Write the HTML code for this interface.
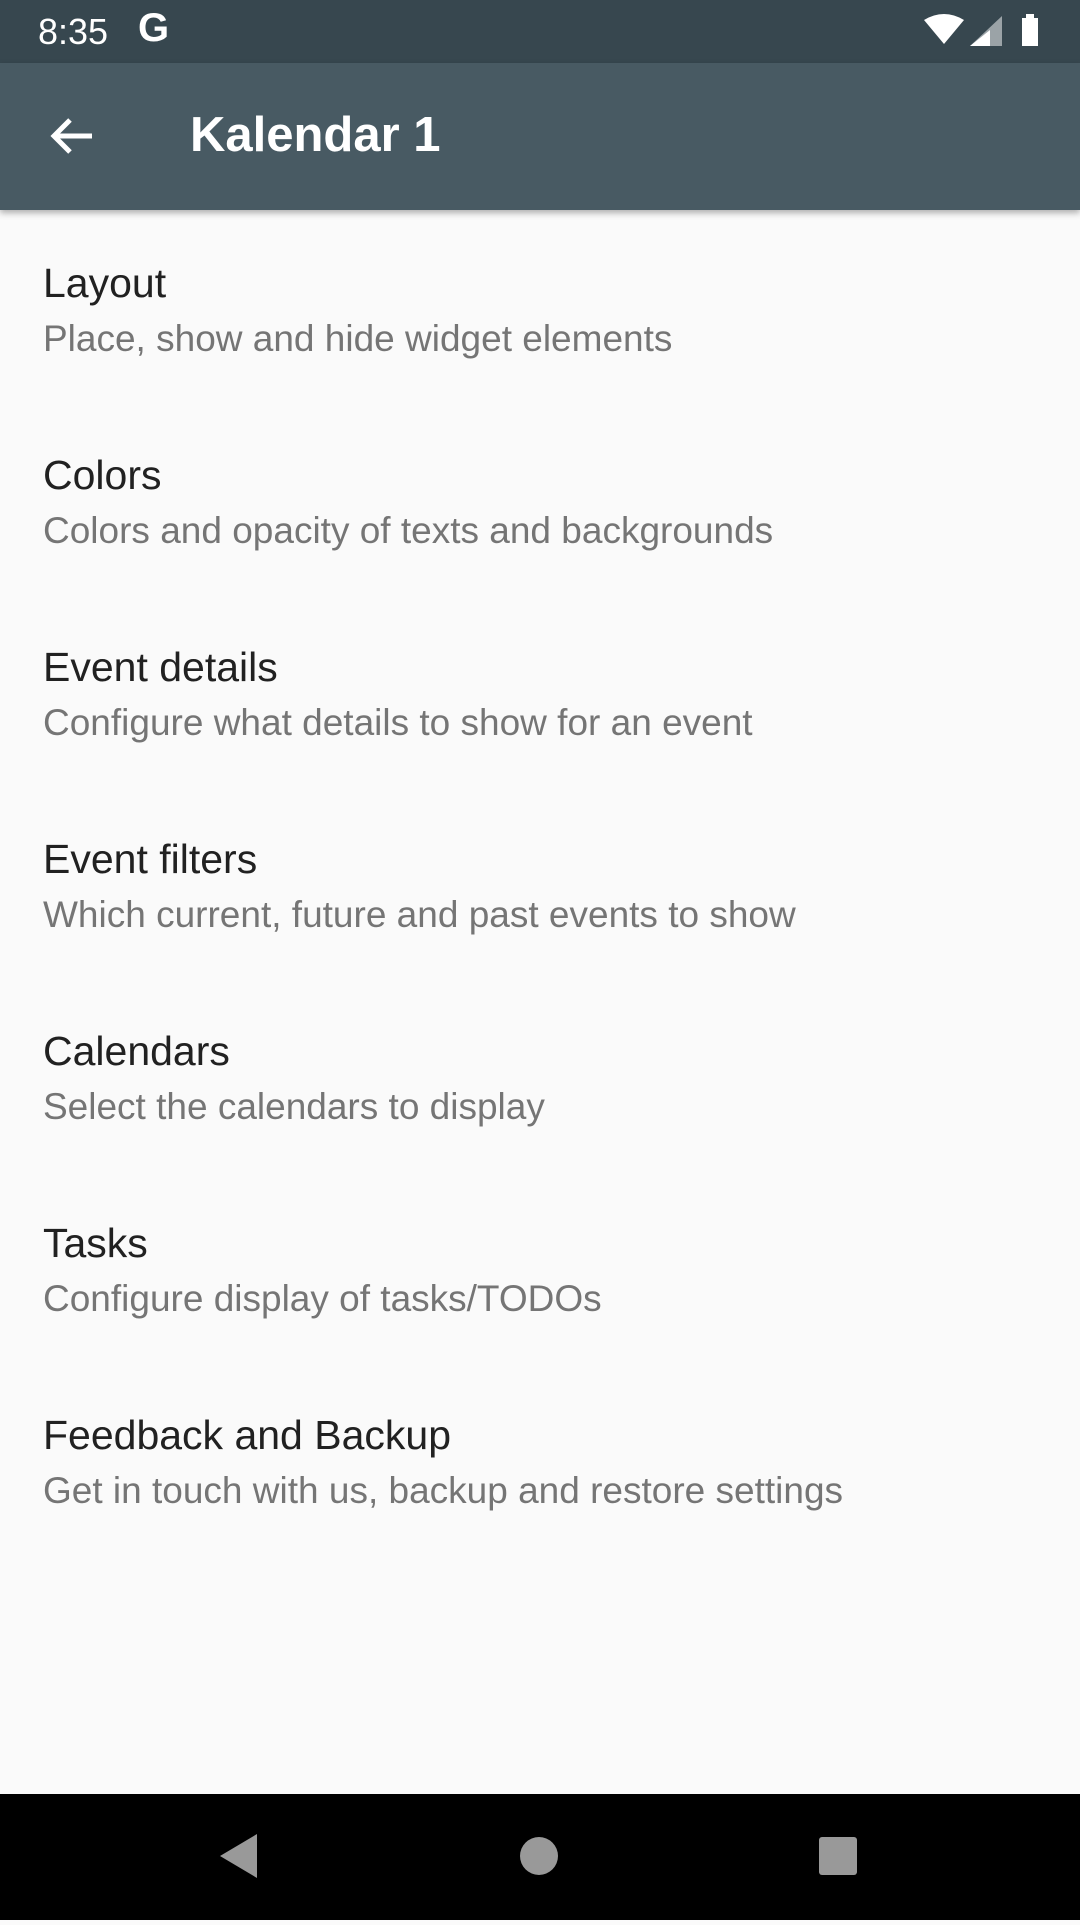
<!DOCTYPE html>
<html><head><meta charset="utf-8"><style>
body{margin:0;width:1080px;height:1920px;background:#fafafa;position:relative;overflow:hidden;font-family:"Liberation Sans",sans-serif}
.sb{position:absolute;left:0;top:0;width:1080px;height:63px;background:#37474f;color:#fff}
.tb{position:absolute;left:0;top:63px;width:1080px;height:147px;background:#485a63;box-shadow:0 3px 6px rgba(0,0,0,.3);color:#fff}
.it{position:absolute;left:43px}
.t{font-size:41px;color:#212121;line-height:56px;height:59px}
.s{font-size:37px;color:#757575;line-height:50px}
.nav{position:absolute;left:0;top:1794px;width:1080px;height:126px;background:#000}
</style></head><body>
<div class="sb">
<div style="position:absolute;left:38px;top:11px;font-size:36px;">8:35</div>
<div style="position:absolute;left:138px;top:6px;font-size:40px;font-weight:bold">G</div>
<svg style="position:absolute;left:920px;top:12px" width="130" height="40" viewBox="0 0 130 40">
<path d="M4 8 Q24 -4 44 8 L24 32 Z" fill="#fff"/>
<path d="M50 34 L82 34 L82 4 Z" fill="#fff" opacity=".5"/><path d="M50 34 L70 34 L70 18 Z" fill="#fff"/>
<rect x="102" y="6" width="16" height="28" fill="#fff"/><rect x="106" y="2" width="8" height="5" fill="#fff"/>
</svg>
</div>
<div class="tb">
<svg style="position:absolute;left:48px;top:52px" width="48" height="42" viewBox="0 0 48 42"><path d="M44 21 H6 M22 5 L6 21 L22 37" stroke="#fff" stroke-width="5" fill="none"/></svg>
<div style="position:absolute;left:190px;top:44px;font-size:49px;font-weight:bold;">Kalendar 1</div>
</div>
<div class="it" style="top:255px"><div class="t">Layout</div><div class="s">Place, show and hide widget elements</div></div>
<div class="it" style="top:447px"><div class="t">Colors</div><div class="s">Colors and opacity of texts and backgrounds</div></div>
<div class="it" style="top:639px"><div class="t">Event details</div><div class="s">Configure what details to show for an event</div></div>
<div class="it" style="top:831px"><div class="t">Event filters</div><div class="s">Which current, future and past events to show</div></div>
<div class="it" style="top:1023px"><div class="t">Calendars</div><div class="s">Select the calendars to display</div></div>
<div class="it" style="top:1215px"><div class="t">Tasks</div><div class="s">Configure display of tasks/TODOs</div></div>
<div class="it" style="top:1407px"><div class="t">Feedback and Backup</div><div class="s">Get in touch with us, backup and restore settings</div></div>
<div class="nav">
<svg width="1080" height="126"><path d="M220 62 L257 40 L257 84 Z" fill="#999"/><circle cx="539" cy="62" r="19" fill="#999"/><rect x="819" y="43" width="38" height="38" rx="3" fill="#999"/></svg>
</div>
</body></html>
